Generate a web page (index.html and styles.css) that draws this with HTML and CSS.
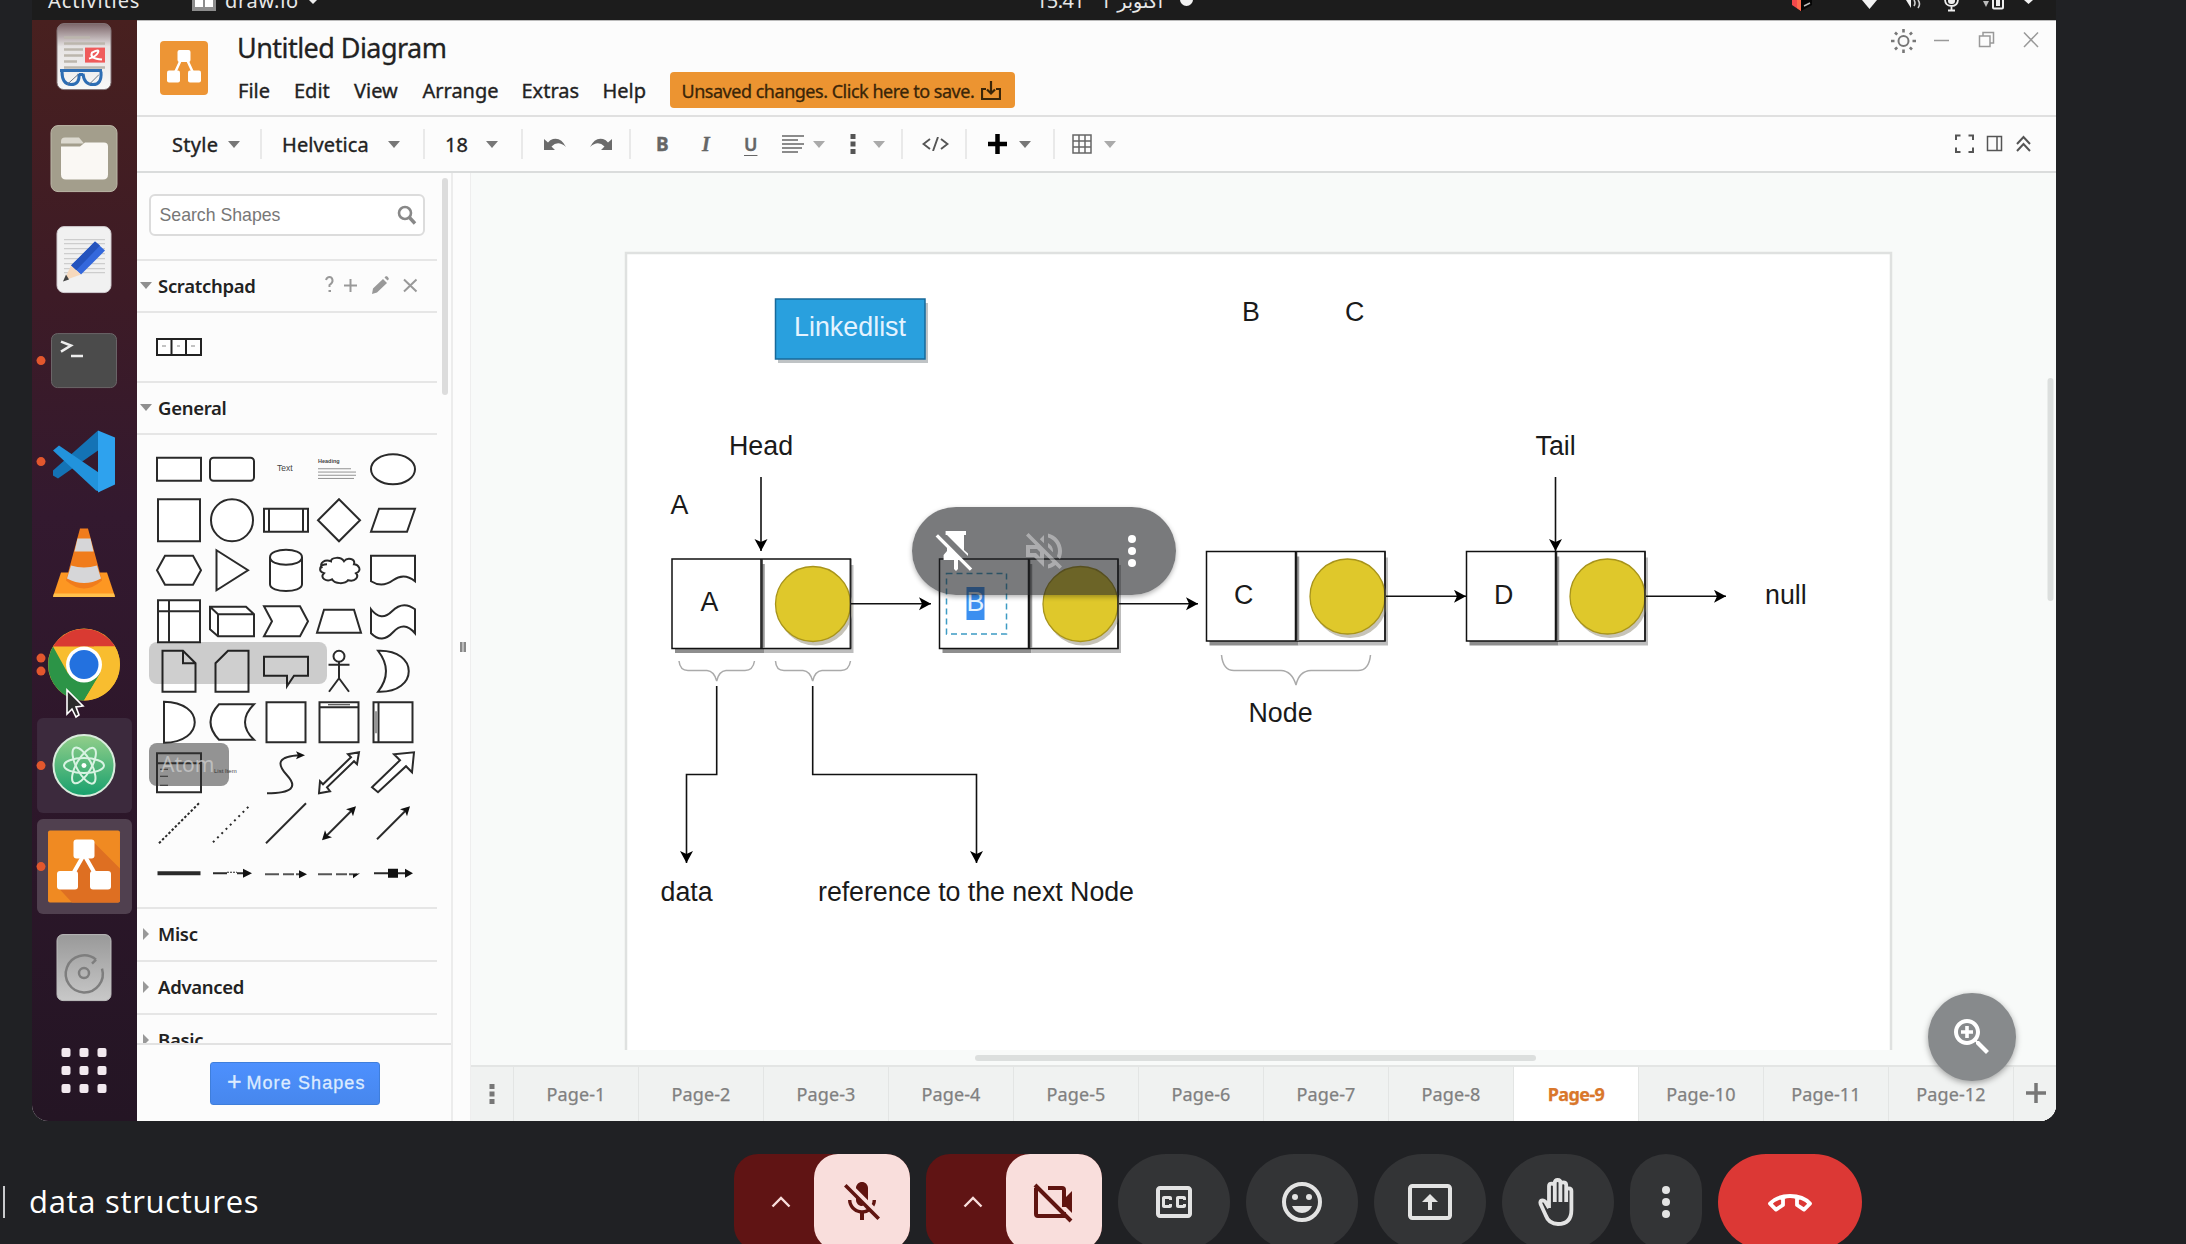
FILE: index.html
```html
<!DOCTYPE html>
<html lang="en">
<head>
<meta charset="utf-8">
<title>data structures</title>
<link rel="stylesheet" href="styles.css">
</head>
<body>
<main class="meeting">
  <section class="share">
    <div class="topbar">
      <span class="tb-activities">Activities</span>
      <svg class="tb-app" width="24" height="20" viewBox="0 0 24 20"><rect width="24" height="19" fill="#8d8d8d"/><rect x="3" y="8" width="8" height="7" fill="#fff"/><rect x="13" y="8" width="8" height="7" fill="#fff"/></svg>
      <span class="tb-name">draw.io</span>
      <i class="tri tb-tri"></i>
      <span class="tb-time">15:41</span><span class="tb-day">1</span><span class="tb-month" dir="rtl">اکتوبر</span><i class="tb-dot"></i>
      <svg class="tb-status" width="256" height="20" viewBox="1786 0 256 20">
        <path d="M1792 0h9v11l-9-6z" fill="#f4484b"/><path d="M1797 0h4v11l-4-3z" fill="#ff6a4c"/><path d="M1801 0h11v5l-11 6z" fill="#050505"/><path d="M1804 6l6-3" stroke="#bbb" stroke-width="1.500"/>
        <path d="M1862 0h15l-7.500 9z" fill="#f2f2f2"/>
        <path d="M1901 0h5l5 8V0z" fill="#f2f2f2"/><path d="M1914 0q2 3 0 6M1918 0q3 4 0 8" stroke="#cfcfcf" stroke-width="1.600" fill="none"/>
        <rect x="1948" y="-10" width="7" height="14" rx="3" fill="#eee"/><path d="M1945-1q0 7 6.500 7t6.500-7M1951.500 6v5M1948 10.500h7" stroke="#eee" stroke-width="1.800" fill="none"/>
        <rect x="1993" y="-6" width="10" height="14.500" rx="1" fill="none" stroke="#eee" stroke-width="2"/><rect x="1996" y="0" width="4" height="6" fill="#eee"/><path d="M1983 1h6l-3 6z" fill="#bbb"/>
        <path d="M2024 0h9l-4.500 4z" fill="#f2f2f2"/>
      </svg>
    </div>
    <div class="desktop">
      <nav class="dock">
        <svg viewBox="-51 -50.600 105 101.200"><defs><linearGradient id="pdf" x2="0" y2="1"><stop stop-color="#7b6468"/><stop offset=".35" stop-color="#e6e3e3"/><stop offset="1" stop-color="#f8f8f8"/></linearGradient></defs><rect x="-27" y="-33" width="54" height="66" rx="7" fill="url(#pdf)" stroke="#857679"/><path d="M-20-19H6M-20-13H21M-20-7H-1M-20-1H-1M-20 5H-7M-20 11H21" stroke="#bcb6ad" stroke-width="2.500"/><rect x="1" y="-9" width="20" height="15" fill="#ef5b5b"/><path d="M5 2Q12 0 14-4T8-4Q5 2 18 3" stroke="#fff" stroke-width="2" fill="none"/><path d="M-24 14H18M-22 15Q-22 28-13 28T-5 17M-1 17Q0 28 9 28T17 15M-5 18H-1" stroke="#2d6db4" stroke-width="3" fill="none"/><path d="M-17 28L-6 18M5 28L15 18" stroke="#697586" fill="none"/></svg>
        <svg viewBox="-51 -50.600 105 101.200"><rect x="-33" y="-33" width="66" height="66" rx="7" fill="#a39e8c" stroke="#bdb8a8"/><path d="M-23-17q0-4 4-4H-5l5 6H-23z" fill="#dcd9cf"/><path d="M-23-12H-4l5-4H20q4 0 4 4V16q0 5-5 5H-18q-5 0-5-5z" fill="#faf8f4"/></svg>
        <svg viewBox="-51 -50.600 105 101.200"><rect x="-27" y="-33" width="54" height="66" rx="7" fill="#f1f1f1" stroke="#cfc9cd"/><path d="M-20-20H21M-20-16H21M-20-11H21M-20-6H21M-20-1H21M-20 4H21M-20 9H21M-20 13H21" stroke="#cdcdcd" stroke-width="1.200"/><path d="M11-18L21-9-3 15-13 6z" fill="#3468dc"/><path d="M11-18L16-14-8 11-13 6z" fill="#2453bd"/><path d="M-13 6L-3 15-20 21z" fill="#f6d9bd"/><path d="M-18 15L-15 20-21 22z" fill="#444"/></svg>
        <svg viewBox="-51 -50.600 105 101.200"><rect x="-32.500" y="-27" width="65" height="54" rx="6" fill="#4b4b4b" stroke="#6b6568"/><path d="M-23-19L-13-15-23-9M-13-4.500H-1" stroke="#eee" stroke-width="2.500" fill="none"/><circle cx="-43" cy="0" r="4.500" fill="#e2572d"/></svg>
        <svg viewBox="-51 -50.600 105 101.200"><path d="M14-31L-31 9V14L-26 17 14-11z" fill="#1473b5"/><path d="M-31-11L-25-16 16 12V30L12 29z" fill="#2293dc"/><path d="M14-31L31-24V23L14 31z" fill="#2ea2ee"/><circle cx="-43" cy="0" r="4.500" fill="#e2572d"/></svg>
        <svg viewBox="-51 -50.600 105 101.200"><path d="M-23 10H23L31 34H-31z" fill="#fd9722"/><path d="M-30 31H30L31 34.500H-31z" fill="#ffc04c"/><path d="M-4-34H4L18 18Q0 34-18 18z" fill="#f07c1c"/><path d="M-6.500-24H6.500L9.500-11H-9.500zM-13 3Q0 7 13 3L17 16Q0 25-17 16z" fill="#d6d6d8"/></svg>
        <svg viewBox="-51 -50.600 105 101.200"><circle r="36" fill="#f8bd2f"/><path d="M-31-18A36 36 0 0 1 31-18H0z" fill="#d93a32"/><path d="M-31-18A36 36 0 0 0 0 36L16 9-16 9z" fill="#2c9447"/><path d="M31-18A36 36 0 0 1 0 36L17 8 10-18z" fill="#f8bd2f"/><circle r="18" fill="#fff"/><circle r="14.500" fill="#2371df"/><circle cx="-43" cy="-6.500" r="4.500" fill="#e2572d"/><circle cx="-43" cy="6.500" r="4.500" fill="#e2572d"/></svg>
        <svg viewBox="-51 -50.600 105 101.200"><defs><linearGradient id="atom" x2="0" y2="1"><stop stop-color="#93cf8a"/><stop offset="1" stop-color="#17a06d"/></linearGradient></defs><rect x="-47" y="-47.500" width="95" height="95" rx="6" fill="#3c2a3d"/><circle r="30.500" fill="url(#atom)" stroke="#d9ecdd" stroke-width="2"/><g fill="none" stroke="#d8f3e2" stroke-width="2"><ellipse rx="20" ry="7.500"/><ellipse rx="20" ry="7.500" transform="rotate(62)"/><ellipse rx="20" ry="7.500" transform="rotate(120)"/></g><circle r="2.500" fill="#fff"/><circle cx="-43" cy="0" r="4.500" fill="#e2572d"/></svg>
        <svg viewBox="-51 -50.600 105 101.200"><rect x="-47" y="-47.500" width="95" height="95" rx="6" fill="#50404f"/><rect x="-36" y="-36" width="72" height="72" rx="2" fill="#f08a22"/><path d="M9-25L36 2V34q0 2-2 2H-12L-26 21-4-4z" fill="#de6f22"/><path d="M0-12L-16 16M0-12L16 16" stroke="#fff" stroke-width="4"/><g fill="#fff"><rect x="-10.500" y="-27" width="21" height="19" rx="3"/><rect x="-27" y="4.500" width="21" height="18.500" rx="3"/><rect x="6" y="4.500" width="21" height="18.500" rx="3"/></g><circle cx="-43" cy="0" r="4.500" fill="#e2572d"/></svg>
        <svg viewBox="-51 -50.600 105 101.200"><defs><linearGradient id="disk" x2="0" y2="1"><stop stop-color="#999"/><stop offset="1" stop-color="#c8c8c8"/></linearGradient></defs><rect x="-27" y="-33" width="54" height="66" rx="6" fill="url(#disk)" stroke="#bcbcbc"/><path d="M12-8A18.500 18.500 0 1 0 18 1M12-8l-4 4" fill="none" stroke="#7e7e7e" stroke-width="2.500"/><circle cy="5.500" r="5" fill="none" stroke="#7e7e7e" stroke-width="2.500"/></svg>
        <svg viewBox="-51 -53 105 101.200"><g fill="#f2e9ef"><rect x="-22.500" y="-23" width="9" height="9" rx="2"/><rect x="-4.500" y="-23" width="9" height="9" rx="2"/><rect x="13.500" y="-23" width="9" height="9" rx="2"/><rect x="-22.500" y="-5" width="9" height="9" rx="2"/><rect x="-4.500" y="-5" width="9" height="9" rx="2"/><rect x="13.500" y="-5" width="9" height="9" rx="2"/><rect x="-22.500" y="13" width="9" height="9" rx="2"/><rect x="-4.500" y="13" width="9" height="9" rx="2"/><rect x="13.500" y="13" width="9" height="9" rx="2"/></g></svg>
      </nav>

      <div class="app">
        <header class="app-head">
          <svg class="logo" width="48" height="54" viewBox="0 0 48 54"><rect width="48" height="54" rx="4" fill="#ed9535"/><path d="M24 12L13 36M24 12L35 36" stroke="#fff" stroke-width="2.500"/><g fill="#fff"><rect x="17.500" y="9" width="13" height="12" rx="2"/><rect x="7" y="29.500" width="13" height="12" rx="2"/><rect x="28" y="29.500" width="13" height="12" rx="2"/></g></svg>
          <div class="head-text">
            <h1>Untitled Diagram</h1>
            <div class="menu">
              <span>File</span><span>Edit</span><span>View</span><span>Arrange</span><span>Extras</span><span>Help</span>
              <button class="unsaved"><span>Unsaved changes. Click here to save.</span><svg width="20" height="20" viewBox="0 0 20 20" fill="none" stroke="#3a2508" stroke-width="2.200"><path d="M5 8H1V18H19V8H15M10 0V12M6 8.500L10 12.500 14 8.500"/></svg></button>
            </div>
          </div>
          <svg class="window-btns" width="150" height="26" viewBox="1890 28 150 26" fill="none" stroke="#777" stroke-width="2">
            <circle cx="1903.500" cy="41" r="5"/><path stroke-width="2.600" d="M1903.500 29v3.500M1903.500 49.500V53M1891 41h3.500M1912.500 41h3.500M1895 32.500l2.200 2.200M1912 32.500l-2.200 2.200M1895 49.500l2.200-2.200M1912 49.500l-2.200-2.200"/>
            <path stroke-width="1.500" stroke="#999" d="M1934 40.500h15M1979.500 36h10.500v10.500h-10.500zM1983 36v-3.500h10.500V43H1990M2024 32.500l14 14.500M2038 32.500l-14 14.500"/>
          </svg>
        </header>

        <div class="toolbar">
          <div class="seg s1"><span>Style</span><i class="tri"></i></div>
          <div class="seg s2"><span>Helvetica</span><i class="tri"></i></div>
          <div class="seg s3"><span>18</span><i class="tri"></i></div>
          <div class="seg s4">
            <svg width="23" height="14" viewBox="0 0 23 14"><path d="M0 2V13H11L7.500 9.500Q14 3 22 10 17 0 9 2 6 2.500 4 5.500z" fill="#6b6b6b"/></svg>
            <svg width="23" height="14" viewBox="0 0 23 14"><path d="M23 2V13H12L15.500 9.500Q9 3 1 10 6 0 14 2 17 2.500 19 5.500z" fill="#6b6b6b"/></svg>
          </div>
          <div class="seg s5">
            <b class="bold">B</b><b class="ital">I</b><b class="under">U</b>
            <svg class="align" width="22" height="18" viewBox="0 0 22 18"><path d="M0 1H22M0 5H16M0 9H22M0 13H20M0 17H16" stroke="#666" stroke-width="1.600"/></svg><i class="tri light"></i>
            <svg class="vdots" width="6" height="20" viewBox="0 0 6 20" fill="#555"><path d="M.5 0h5v5h-5zM.5 7.500h5v5h-5zM.5 15h5v5h-5z"/></svg><i class="tri light"></i>
          </div>
          <div class="seg s6"><svg width="27" height="14" viewBox="0 0 27 14" fill="none" stroke="#555" stroke-width="1.900"><path d="M8 2L1.500 7 8 12M19 2l6.500 5L19 12M16 0L11 14"/></svg></div>
          <div class="seg s7"><svg width="19" height="20" viewBox="0 0 19 20"><path d="M9.500 0V20M0 10H19" stroke="#000" stroke-width="4.500"/></svg><i class="tri"></i></div>
          <div class="seg s8"><svg width="20" height="20" viewBox="0 0 20 20" fill="none" stroke="#666" stroke-width="1.500"><path d="M1 1H19V19H1zM1 7H19M1 13H19M7 1V19M13 1V19"/></svg><i class="tri light"></i></div>
          <svg class="view-btns" width="78" height="20" viewBox="1954 134 78 20" fill="none" stroke="#555" stroke-width="2"><path d="M1956 140v-4.500h4.500M1968.500 135.500h4.500v4.500M1973 147.500v4.500h-4.500M1960.500 152h-4.500v-4.500"/><path stroke-width="1.500" d="M1987.500 136.500h14v14h-14zM1997 136.500v14"/><path d="M2017 144l6.500-7 6.500 7M2017 151l6.500-7 6.500 7"/></svg>
        </div>

        <div class="body">
          <aside class="sidebar">
            <div class="shapes-scroll">
              <div class="search"><span>Search Shapes</span><svg width="20" height="20" viewBox="0 0 20 20" fill="none" stroke="#888"><circle cx="8" cy="8" r="6" stroke-width="2.600"/><path d="M12 12l6 6.500" stroke-width="3.400"/></svg></div>
              <div class="section scratch"><i class="tri"></i><b>Scratchpad</b>
                <svg width="94" height="20" viewBox="324 276 94 20" fill="none" stroke="#999" stroke-width="2"><path d="M326 281q1-3 3.500-3t3 3-3 5v2M328.500 292h2.500M344 286.500h13M350.500 280v13M404 280.500l12.500 12M416.500 280.500l-12.500 12"/><path fill="#999" stroke="none" d="M372 295l1-5.500 10-9.500 4 4-10 9.500zM384.500 278.500l1.500-1.500q2 0 3 3l-1.500 1.500z"/></svg>
              </div>
              <div class="scratch-body"><svg width="46" height="18" viewBox="0 0 46 18"><path d="M1 1H45V17H1zM15.500 1V17M30 1V17" fill="#fff" stroke="#222" stroke-width="2"/><path d="M6 8h4M21 8h3M35 8h4" stroke="#888"/></svg></div>
              <div class="section"><i class="tri"></i><b>General</b></div>
              <div class="palette">
                <svg viewBox="-27 -25 54 50"><path d="M-22-11.500H22V11.500H-22z"/></svg>
                <svg viewBox="-27 -25 54 50"><rect x="-22" y="-11.500" width="44" height="23" rx="3.500"/></svg>
                <svg viewBox="-27 -25 54 50"><text x="-9" y="2" font-size="8.500" class="t">Text</text></svg>
                <svg viewBox="-27 -25 54 50"><text x="-21" y="-6" font-size="5.500" font-weight="bold" class="t">Heading</text><path stroke-width=".8" stroke="#777" d="M-21-.5H12M-21 2.800H17M-21 6H17M-21 9.200H15"/></svg>
                <svg viewBox="-27 -25 54 50"><ellipse rx="22" ry="15"/></svg>

                <svg viewBox="-27 -25 54 50"><path d="M-21-21H21V21H-21z"/></svg>
                <svg viewBox="-27 -25 54 50"><circle r="21"/></svg>
                <svg viewBox="-27 -25 54 50"><path d="M-22-11.500H22V11.500H-22zM-17-11.500V11.500M17-11.500V11.500"/></svg>
                <svg viewBox="-27 -25 54 50"><path d="M0-21L21 0 0 21-21 0z"/></svg>
                <svg viewBox="-27 -25 54 50"><path d="M-14-11.500H22L14 11.500H-22z"/></svg>

                <svg viewBox="-27 -25 54 50"><path d="M-14-14.500H14L22 0 14 14.500H-14L-22 0z"/></svg>
                <svg viewBox="-27 -25 54 50"><path d="M-15.500-20L16 0-15.500 20z"/></svg>
                <svg viewBox="-27 -25 54 50"><path d="M-16-13V14C-16 23 16 23 16 14V-13C16-23-16-23-16-13C-16-3 16-3 16-13"/></svg>
                <svg viewBox="-27 -25 54 50"><path d="M-12-6C-20-6-21 1-15 3C-20 8-12 12-7 9C-4 14 6 14 9 10C17 12 20 6 17 3C24 0 19-6 15-6C17-12 8-13 5-9C2-14-8-13-8-9C-14-11-20-8-17-2"/></svg>
                <svg viewBox="-27 -25 54 50"><path d="M-22-14.500H22V11Q11 2 0 10T-22 11z"/></svg>

                <svg viewBox="-27 -25 54 50"><path d="M-21-21H21V21H-21zM-10-21V21M-21-10H21"/></svg>
                <svg viewBox="-27 -25 54 50"><path d="M-22-14.500H14L22-7V15H-14L-22 8zM-22-14.500L-14-7H22M-14-7V15"/></svg>
                <svg viewBox="-27 -25 54 50"><path d="M-22-15H14L22 0 14 15H-22L-14 0z"/></svg>
                <svg viewBox="-27 -25 54 50"><path d="M-15-11.500H15L22 11.500H-22z"/></svg>
                <svg viewBox="-27 -25 54 50"><path d="M-22-12Q-12 1-1-10T22-12V12Q11-1 0 11T-22 12z"/></svg>

                <svg viewBox="-27 -25 54 50"><path d="M-16.500-20.500H4L16.500-8V20.500H-16.500zM4-20.500V-8H16.500"/></svg>
                <svg viewBox="-27 -25 54 50"><path d="M-4-20.500H16.500V20.500H-16.500V-8z"/></svg>
                <svg viewBox="-27 -25 54 50"><path d="M-22-14.500H22V4.500H8L1 15V4.500H-22z"/></svg>
                <svg viewBox="-27 -25 54 50"><circle cy="-15" r="5.500"/><path d="M0-9.500V7M-10.500-6.500H10.500M0 7L-10 20.500M0 7L10 20.500"/></svg>
                <svg viewBox="-27 -25 54 50"><path d="M-15-20.500C26-22 26 22-15 20.500Q1 0-15-20.500z"/></svg>

                <svg viewBox="-27 -25 54 50"><path d="M-15-20.500C26-20 26 20-15 20.500z"/></svg>
                <svg viewBox="-27 -25 54 50"><path d="M-13-18H22Q4 0 22 17.500H-13Q-30 0-13-18z"/></svg>
                <svg viewBox="-27 -25 54 50"><path d="M-19.500-20H19.500V20H-19.500z"/></svg>
                <svg viewBox="-27 -25 54 50"><path d="M-19.500-20H19.500V20H-19.500zM-19.500-15H19.500"/><path stroke-width="1" d="M-11-17.500H11"/></svg>
                <svg viewBox="-27 -25 54 50"><path d="M-19.500-20H19.500V20H-19.500zM-14.500-20V20"/><path stroke-width="1" d="M-17-11V11"/></svg>

                <svg viewBox="-27 -25 54 50"><path d="M-22-19H22V20H-22zM-22-9H22"/><path stroke-width="1" d="M-19-3H-11M-19 4H-11M-19 13H-11"/></svg>
                <svg viewBox="-27 -25 54 50"><text x="-18" y="1" font-size="6" class="t">List Item</text></svg>
                <svg viewBox="-27 -25 54 50"><path fill="none" d="M-19 21C6 21 12 15 1 3S-8-16 14-17"/><path class="k" d="M19-17L10-21 12-17 10-13z"/></svg>
                <svg viewBox="-27 -25 54 50"><path d="M-20 21L-19 9-16 12 12-15 9-18 20-20 18-8 15-11-12 15-9 19z"/></svg>
                <svg viewBox="-27 -25 54 50"><path d="M-21 15L7-12 1-18 21-20 19 0 13-6-15 20z"/></svg>

                <svg viewBox="-27 -25 54 50"><path stroke-dasharray="2.500 2" d="M-20 20L20-20"/></svg>
                <svg viewBox="-27 -25 54 50"><path stroke-dasharray="2 4" d="M-19 19L19-19"/></svg>
                <svg viewBox="-27 -25 54 50"><path d="M-20 20L20-20"/></svg>
                <svg viewBox="-27 -25 54 50"><path d="M-13 13L13-13"/><path class="k" d="M-17 17L-14 7-12 12-7 14zM17-17L14-7 12-12 7-14z"/></svg>
                <svg viewBox="-27 -25 54 50"><path d="M-16 16L13-13"/><path class="k" d="M17-17L14-7 12-12 7-14z"/></svg>

                <svg viewBox="-27 -25 54 50"><path stroke-width="4" d="M-21.500 0H21.500"/></svg>
                <svg viewBox="-27 -25 54 50"><path d="M-19 0H-5M5 0H15"/><path stroke-width="1" stroke-dasharray="2 1" d="M-5-1H5"/><path class="k" d="M20 0L11-4.500V4.500z"/></svg>
                <svg viewBox="-27 -25 54 50"><path stroke="#555" d="M-21 1H-7M-3 1H8M10 1H17"/><path class="k" d="M21 1L13-3V5z"/></svg>
                <svg viewBox="-27 -25 54 50"><path stroke="#555" d="M-21 1H-7M-3 1H8M10 1H18"/><path class="k" d="M21 0L14 1V5z"/></svg>
                <svg viewBox="-27 -25 54 50"><path d="M-19 0H14"/><path class="k" d="M-5-4.500H5V4.500H-5zM20 0L12-4.500V4.500z"/></svg>
              </div>
              <div class="section closed"><i class="rtri"></i><b>Misc</b></div>
              <div class="section closed"><i class="rtri"></i><b>Advanced</b></div>
              <div class="section closed"><i class="rtri"></i><b>Basic</b></div>
              <i class="side-thumb"></i>
              <div class="ghost ghost-wide"></div>
              <div class="ghost ghost-atom">Atom</div>
            </div>
            <div class="more"><button><span class="plus">+</span>More Shapes</button></div>
          </aside>
          <div class="splitter"><i></i></div>

          <div class="work">
            <div class="canvas">
              <svg class="diagram" width="1585" height="892" viewBox="471 173 1585 892">
                <defs>
                  <marker id="arrow" markerUnits="userSpaceOnUse" markerWidth="14" markerHeight="14" refX="12" refY="6.500" orient="auto"><path d="M0 0L12 6.500 0 13 3 6.500z"/></marker>
                  <g id="node">
                    <path d="M3 4H92V94H3z" fill="#8e8e8e"/><path d="M92 6H181.500V94H92z" fill="#bdbdbd"/>
                    <path d="M0 0H89V89.500H0zM89 0H178.500V89.500H89z" fill="#fff" stroke="#111" stroke-width="1.500"/>
                    <path d="M91.500 5V89" stroke="#999" stroke-width="2.500"/><path d="M90 0V89" stroke="#222" stroke-width="1.500"/>
                    <ellipse cx="143.500" cy="49" rx="37.500" ry="37.500" fill="#c6c3b8"/>
                    <ellipse cx="141" cy="45" rx="37.500" ry="37.500" fill="#dfc82b" stroke="#a8941b" stroke-width="1.300"/>
                    <path d="M178.500 0V89.500" stroke="#222" stroke-width="1.500"/>
                  </g>
                </defs>
                <path d="M626 1050V253H1891V1050" fill="#fff" stroke="#dfe1e0" stroke-width="2.500"/>
                <path d="M778 303H928V363H778z" fill="#bfc3c5"/>
                <path d="M775.500 299H925V359H775.500z" fill="#29a0de" stroke="#17699a" stroke-width="1.500"/>
                <use href="#node" x="672" y="559"/><use href="#node" x="939.500" y="559"/><use href="#node" x="1206.500" y="551.500"/><use href="#node" x="1466.500" y="551.500"/>
                <g fill="none" stroke="#111" stroke-width="1.600">
                  <path class="ln" d="M761 477V551"/><path class="ln" d="M1555.500 477V551"/>
                  <path class="ln" d="M851 603.700H931"/><path class="ln" d="M1119 603.700H1198"/><path class="ln" d="M1386 596.300H1466"/><path class="ln" d="M1646 596.300H1726"/>
                  <path class="ln" d="M716.700 686V774.500H686.500V863"/><path class="ln" d="M812.700 686V774.500H976.500V863"/>
                </g>
                <g fill="none" stroke="#aaa" stroke-width="1.500">
                  <path d="M679 661Q680 670.500 688 670.500H707Q714 671 716.700 681Q719 671 726 670.500H745Q753 670.500 754.500 661"/>
                  <path d="M775.500 661Q776 670.500 784 670.500H803Q810 671 812.700 681Q815 671 822 670.500H841Q849 670.500 850.500 661"/>
                  <path d="M1221.500 655Q1223 670.500 1234 670.500H1281Q1292 671 1296 685Q1299 671 1311 670.500H1358Q1369 670.500 1370.500 655"/>
                </g>
                <path d="M946.500 573.500H1006.500V634H946.500z" fill="none" stroke="#3d9bc4" stroke-width="1.500" stroke-dasharray="6 4"/>
                <rect x="966.500" y="587" width="18" height="33" fill="#3b8ff0"/>
                <g class="labels">
                  <text x="794" y="335.500" class="on-blue" textLength="112">Linkedlist</text>
                  <text x="1242" y="320.700">B</text><text x="1345" y="320.700">C</text>
                  <text x="729" y="454.800">Head</text><text x="1535.500" y="454.800">Tail</text>
                  <text x="670.500" y="514.300">A</text><text x="700.500" y="610.700">A</text>
                  <text x="966.500" y="610.500" class="on-blue">B</text>
                  <text x="1234" y="603.500">C</text><text x="1494" y="603.500">D</text><text x="1765" y="603.500">null</text>
                  <text x="1248.500" y="722">Node</text>
                  <text x="660.500" y="900.500">data</text><text x="818" y="900.500" textLength="316">reference to the next Node</text>
                </g>
                <rect x="975" y="1055" width="561" height="6" rx="3" fill="#dcdfde"/>
                <rect x="2047.500" y="378" width="6" height="223" rx="3" fill="#dcdfde"/>
              </svg>
            </div>
            <div class="tabs">
              <div class="tab-menu"><svg width="6" height="20" viewBox="0 0 6 20" fill="#777"><path d="M.5 0h5v5h-5zM.5 7.500h5v5h-5zM.5 15h5v5h-5z"/></svg></div>
              <span>Page-1</span><span>Page-2</span><span>Page-3</span><span>Page-4</span><span>Page-5</span><span>Page-6</span><span>Page-7</span><span>Page-8</span><span class="active">Page-9</span><span>Page-10</span><span>Page-11</span><span>Page-12</span>
              <div class="tab-add"><svg width="20" height="20" viewBox="0 0 20 20"><path d="M10 0V20M0 10H20" stroke="#777" stroke-width="3.500"/></svg></div>
            </div>
          </div>
        </div>
      </div>
    </div>

    <svg class="cursor" width="22" height="32" viewBox="0 0 22 32"><path d="M2 2V26L7 21 11 29 14 27 11 19 18 18z" fill="#2b2b2b" stroke="#fff" stroke-width="1.600"/></svg>
    <div class="pill">
      <svg viewBox="0 0 24 24" fill="#fff"><path d="M6.800 2H17V4H16V11.500L18 13.300V14.500L7.500 4H6.800zM7.500 9L15 16.500H13V21L12 22 11 21V16.500H5.800V14L7.500 12z"/><path d="M2.400 4.200L19.500 21.300" stroke="#fff" stroke-width="1.700"/></svg>
      <svg class="dim" viewBox="0 0 24 24" fill="#fff"><path d="M16.500 12c0-1.770-1.020-3.290-2.500-4.030v2.210l2.450 2.450c.03-.2.050-.41.050-.63zm2.500 0c0 .94-.2 1.820-.54 2.640l1.510 1.510C20.630 14.910 21 13.500 21 12c0-4.280-2.990-7.860-7-8.770v2.060c2.890.86 5 3.540 5 6.710zM4.270 3L3 4.270 7.730 9H3v6h4l5 5v-6.730l4.250 4.250c-.67.52-1.420.93-2.250 1.180v2.060c1.380-.31 2.630-.95 3.690-1.810L19.730 21 21 19.730l-9-9L4.270 3zM12 4L9.910 6.090 12 8.180V4zM5 11H8.500L10 12.500V15L8 13H5z" fill-rule="evenodd"/></svg>
      <svg viewBox="0 0 24 24" fill="#fff"><circle cx="12" cy="6" r="2"/><circle cx="12" cy="12" r="2"/><circle cx="12" cy="18" r="2"/></svg>
    </div>
    <div class="zoom-btn"><svg viewBox="0 0 24 24" fill="#fff"><path d="M15.500 14h-.79l-.28-.27C15.410 12.590 16 11.110 16 9.500 16 5.910 13.090 3 9.500 3S3 5.910 3 9.500 5.910 16 9.500 16c1.610 0 3.090-.59 4.230-1.570l.27.28v.79l5 4.990L20.490 19l-4.990-5zm-6 0C7.010 14 5 11.990 5 9.500S7.010 5 9.500 5 14 7.010 14 9.500 11.990 14 9.500 14z"/><path d="M9.500 6.500V12.500M6.500 9.500H12.500" stroke="#fff" stroke-width="1.800"/></svg></div>
  </section>

  <footer class="controls">
    <div class="room">data structures</div>
    <div class="buttons">
      <div class="split"><div class="caret"><svg width="20" height="12" viewBox="0 0 20 12"><path d="M1.500 10.500L10 2l8.500 8.500" fill="none" stroke="#f9dedc" stroke-width="2.400"/></svg></div>
        <div class="light-btn"><svg viewBox="0 0 24 24" fill="#601410"><path d="M19 11h-1.700c0 .74-.16 1.430-.43 2.050l1.230 1.230c.56-.98.9-2.090.9-3.280zM14.980 11.170c0-.06.020-.11.020-.17V5c0-1.660-1.340-3-3-3S9 3.340 9 5v.18l5.980 5.990zM4.270 3L3 4.270l6.010 6.010V11c0 1.660 1.330 3 2.990 3 .22 0 .44-.03.65-.08l1.660 1.660c-.71.33-1.500.52-2.310.52-2.760 0-5.300-2.100-5.300-5.100H5c0 3.410 2.720 6.230 6 6.720V21h2v-3.280c.91-.13 1.770-.45 2.540-.9L19.730 21 21 19.730 4.270 3z"/></svg></div></div>
      <div class="split"><div class="caret"><svg width="20" height="12" viewBox="0 0 20 12"><path d="M1.500 10.500L10 2l8.500 8.500" fill="none" stroke="#f9dedc" stroke-width="2.400"/></svg></div>
        <div class="light-btn"><svg viewBox="0 0 24 24" fill="none" stroke="#601410" stroke-width="2"><path d="M3 5V18q0 1 1 1H17V17M9 5H16q1 0 1 1V14.500M2.500 3.500L20.500 21.500"/><path d="M17 10.500L21 6.500V17.500L17 13.500z" fill="#601410" stroke="none"/></svg></div></div>
      <div class="round"><svg viewBox="0 0 24 24" fill="#e3e3e3"><path d="M19 4H5c-1.110 0-2 .9-2 2v12c0 1.100.89 2 2 2h14c1.100 0 2-.9 2-2V6c0-1.100-.9-2-2-2zm0 14H5V6h14v12zM7 15h3c.55 0 1-.45 1-1v-1H9.500v.5h-2v-3h2v.5H11v-1c0-.55-.45-1-1-1H7c-.55 0-1 .45-1 1v4c0 .55.450 1 1 1zm7 0h3c.55 0 1-.45 1-1v-1h-1.500v.5h-2v-3h2v.5H18v-1c0-.55-.45-1-1-1h-3c-.55 0-1 .45-1 1v4c0 .55.450 1 1 1z"/></svg></div>
      <div class="round"><svg viewBox="0 0 24 24" fill="#e3e3e3"><circle cx="12" cy="12" r="9" fill="none" stroke="#e3e3e3" stroke-width="2"/><circle cx="8.500" cy="9.500" r="1.500"/><circle cx="15.500" cy="9.500" r="1.500"/><path d="M7 14H17Q15.500 17.500 12 17.500T7 14z"/></svg></div>
      <div class="round"><svg viewBox="0 0 24 24" fill="#e3e3e3"><rect x="2" y="4" width="20" height="16" rx="1.200" fill="none" stroke="#e3e3e3" stroke-width="2"/><path d="M12 8L16 12H13V16H11V12H8z"/></svg></div>
      <div class="round"><svg viewBox="0 0 24 24" fill="none" stroke="#e3e3e3" stroke-width="1.900" stroke-linejoin="round"><path d="M7.500 15V4q0-1.200 1.400-1.200T10.400 4V12M10.400 4V2.300q0-1.300 1.400-1.300t1.400 1.300V12M13.200 3.200q0-1 1.400-1t1.500 1.200V12M16.100 6.500q0-1.300 1.300-1.300t1.300 1.300V16q0 7-6.700 7-4.600 0-6.200-4.500L3.300 13q-.5-1.700.8-1.800 1.300 0 1.900 1.300L7.500 15"/></svg></div>
      <div class="round narrow"><svg viewBox="0 0 24 24" fill="#e3e3e3"><circle cx="12" cy="6" r="2"/><circle cx="12" cy="12" r="2"/><circle cx="12" cy="18" r="2"/></svg></div>
      <div class="round end"><svg viewBox="0 0 24 24" fill="none" stroke="#fff" stroke-width="1.900" stroke-linejoin="round"><path d="M8.500 9.800Q12 8.300 15.500 9.800V13.500L19 15.800 22 12.800Q18.500 9 12 9T2 12.800L5 15.800 8.500 13.500z"/></svg></div>
    </div>
  </footer>
</main>
</body>
</html>
```
FILE: styles.css
```css
* { box-sizing: border-box; }
body { margin: 0; background: #202124; overflow: hidden; }
.meeting { width: 2186px; height: 1244px; overflow: hidden; font-family: "Noto Sans", sans-serif; }
svg { display: block; flex: none; }
b, h1, span, i { font-style: normal; white-space: nowrap; }

.share { position: relative; width: 2024px; height: 1121px; margin-left: 32px; border-radius: 0 0 16px 16px; overflow: hidden; background: #fcfcfc; }

.topbar { height: 20px; background: #1c1c1c; color: #e8e8e8; display: flex; align-items: flex-start; padding-left: 16px; font-size: 20px; line-height: 28px; overflow: hidden; }
.topbar span { margin-top: -13px; flex: none; }
.tb-activities { width: 144px; letter-spacing: .9px; }
.tb-app { margin-top: -8px; }
.tb-name { width: 92px; padding-left: 9px; letter-spacing: .7px; }
.tb-tri { margin-top: -1px; }
.topbar .tb-time { margin-left: 718px; width: 64px; letter-spacing: -.6px; }
.tb-day { width: 14px; }
.tb-month { width: 49px; font-family: "DejaVu Sans", sans-serif; font-size: 19px; }
.tb-dot { width: 13px; height: 13px; border-radius: 50%; background: #f2f2f2; margin: -7px 0 0 17px; }
.tb-status { margin-left: 593px; }

.tri { flex: none; width: 0; height: 0; border: 6px solid transparent; border-top: 7px solid #777; border-bottom: 0; }
.tri.light { border-top-color: #aaa; }
.tri.tb-tri { border-top-color: #eee; border-width: 5px 5px 0; }
.rtri { flex: none; width: 0; height: 0; border: 6px solid transparent; border-left: 6px solid #999; border-right: 0; }

.desktop { display: flex; height: 1101px; }
.dock { width: 105px; overflow: hidden; background: linear-gradient(#48201f, #3d1b26 25%, #33192f 45%, #2e172b 65%, #241524); display: flex; flex-direction: column; }
.dock svg { width: 105px; height: 101.2px; margin-left: .7px; }
.dock svg:first-child { margin-top: -13.6px; }

.app { width: 1919px; display: flex; flex-direction: column; background: #fcfcfc; color: #222; }
.app-head { height: 97px; border-bottom: 2px solid #e0e0e0; border-top: 1px solid #bbb; display: flex; }
.logo { margin: 20px 0 0 23px; }
.head-text { padding: 9px 0 0 29px; }
h1 { margin: 0; font-weight: 400; font-size: 27px; line-height: 36px; letter-spacing: -.55px; -webkit-text-stroke: .3px; }
.menu { display: flex; align-items: center; height: 36px; margin-top: 6px; padding-left: 1px; font-size: 20px; -webkit-text-stroke: .35px; }
.menu > span:nth-child(1) { width: 56px; }
.menu > span:nth-child(2) { width: 60px; }
.menu > span:nth-child(3) { width: 68.5px; }
.menu > span:nth-child(4) { width: 99px; }
.menu > span:nth-child(5) { width: 81px; }
.menu > span:nth-child(6) { width: 67px; }
.unsaved { width: 345px; height: 36px; border: 0; border-radius: 4px; background: #ec9431; color: #3a2508; font: 18px "Noto Sans", sans-serif; letter-spacing: -.48px; padding: 2px 14px 0 12px; display: flex; justify-content: space-between; align-items: center; -webkit-text-stroke: .3px; }
.window-btns { margin: 7px 16px 0 auto; }

.toolbar { height: 56px; border-bottom: 2px solid #dadcdc; display: flex; align-items: center; font-size: 20px; }
.seg { height: 30px; display: flex; align-items: center; border-right: 2px solid #e9e9e9; -webkit-text-stroke: .35px; }
.seg .tri { margin-left: 9px; }
.s1 { width: 125px; padding-left: 35px; letter-spacing: .3px; }
.s1 .tri { margin-left: 10px; }
.s2 { width: 163px; padding-left: 20px; letter-spacing: .1px; }
.s2 span { width: 97px; }
.s3 { width: 98px; padding-left: 20px; }
.s3 span { width: 32px; }
.s4 { width: 108px; padding-left: 21px; gap: 22px; }
.s5 { width: 272px; padding-left: 25px; color: #666; }
.bold { width: 43px; font-size: 19px; }
.ital { width: 45px; padding-left: 3px; font: italic bold 20px "Liberation Serif", serif; }
.under { width: 38px; font-weight: 600; font-size: 18px; text-decoration: underline; text-underline-offset: 4px; }
.vdots { margin-left: 25px; }
.s5 .vdots + .tri { margin-left: 17px; }
.s6 { width: 64px; padding-left: 19px; }
.s7 { width: 88px; padding-left: 21px; }
.s7 .tri { margin-left: 12px; }
.s8 { border: 0; padding-left: 17px; }
.s8 .tri { margin-left: 12px; }
.view-btns { margin: 0 24px 0 auto; }

.body { display: flex; height: 948px; }
.sidebar { width: 316px; border-right: 2px solid #ececec; display: flex; flex-direction: column; }
.shapes-scroll { position: relative; height: 870px; overflow: hidden; }
.search { margin: 21px 0 23px 12px; width: 276px; height: 42px; border: 2px solid #dcdcdc; border-radius: 6px; background: #fff; display: flex; align-items: center; justify-content: space-between; padding: 0 6px 0 8.5px; font: 17.7px "Liberation Sans", sans-serif; color: #777; }
.section { width: 300px; height: 53px; border-top: 2px solid #e6e6e6; border-bottom: 2px solid #e6e6e6; display: flex; align-items: center; padding: 0 0 2px 3px; font-size: 18.5px; letter-spacing: -.3px; }
.section b { margin-left: 6px; font-weight: 600; }
.section .tri { border-top-color: #8f8f8f; }
.scratch { height: 54px; }
.scratch svg { margin-left: auto; margin-right: 19px; }
.scratch-body { height: 68px; padding: 25px 0 0 19px; }
.scratch-body + .section { height: 54px; }
.palette { display: grid; grid-template-columns: repeat(5, 53.5px); grid-auto-rows: 50.5px; padding: 9px 0 8.5px 14.5px; }
.palette svg { width: 54px; height: 50.5px; fill: #fff; stroke: #2a2a2a; stroke-width: 2; overflow: visible; }
.palette .t { fill: #444; stroke: none; font-family: "Liberation Sans", sans-serif; }
.palette .k { fill: #111; stroke: none; }
.closed { height: 53px; border-bottom: 0; }
.closed .rtri { margin-left: 3px; }
.closed b { margin-left: 9px; }
.side-thumb { position: absolute; left: 305px; top: 5px; width: 6px; height: 217px; border-radius: 3px; background: #dcdcdc; }
.ghost { position: absolute; left: 12px; border-radius: 8px; }
.ghost-wide { top: 469px; width: 178px; height: 42px; background: rgba(0, 0, 0, .19); }
.ghost-atom { top: 569.5px; width: 80px; height: 43px; background: rgba(50, 50, 50, .52); color: rgba(205, 205, 205, .75); font-size: 21px; line-height: 43px; padding-left: 12px; }
.more { flex: 1; border-top: 2px solid #e2e2e2; padding: 17px 0 0 72.5px; }
.more button { width: 170px; height: 43px; border: 1px solid #3f7edb; border-radius: 3px; background: linear-gradient(#4d90fe, #4787ed); color: #dcebff; font: 18px "Liberation Sans", sans-serif; letter-spacing: 1.1px; padding: 0; display: flex; align-items: center; justify-content: center; -webkit-text-stroke: .3px; }
.plus { font-size: 25px; width: 23px; margin: -5px 0 0; }
.splitter { width: 18px; border-right: 1px solid #eee; display: flex; align-items: center; padding-left: 7px; }
.splitter i { width: 6px; height: 10px; background: repeating-linear-gradient(90deg, #888 0 2px, #bbb 2px 4px); }
.work { width: 1585px; background: #f8faf9; }
.canvas { height: 892px; }
.diagram { overflow: hidden; }
.ln { marker-end: url(#arrow); }
.labels { font: 26.8px "Liberation Sans", sans-serif; fill: #1a1a1a; }
.labels .on-blue { fill: #e4f3ff; }

.tabs { height: 56px; border-top: 2px solid #e3e5e4; background: #f0f2f1; display: flex; color: #808080; font-size: 18px; letter-spacing: .1px; -webkit-text-stroke: .25px; }
.tabs > * { display: flex; align-items: center; justify-content: center; border-right: 1px solid #e3e5e4; }
.tabs > span { width: 125px; }
.tabs > .tab-menu { width: 43px; padding-bottom: 1px; }
.tabs .active { background: #fff; color: #d9772b; font-weight: 700; letter-spacing: -.6px; }
.tabs .tab-add { flex: 1; border: 0; padding: 0 0 3px 2px; }

.cursor { position: absolute; left: 33px; top: 688px; }
.pill { position: absolute; left: 880px; top: 507px; width: 264px; height: 88px; border-radius: 44px; background: rgba(32, 33, 36, .6); box-shadow: 0 2px 5px rgba(0, 0, 0, .3); display: flex; align-items: center; justify-content: space-around; }
.pill svg, .zoom-btn svg { width: 48px; height: 48px; }
.pill .dim { opacity: .38; }
.zoom-btn { position: absolute; left: 1896px; top: 993px; width: 88px; height: 88px; border-radius: 50%; background: #878a8c; box-shadow: 0 2px 6px rgba(0, 0, 0, .35); display: flex; align-items: center; justify-content: center; }

.controls { display: flex; padding-top: 33px; height: 129px; }
.room { width: 731px; height: 32px; margin: 32px 0 0 3px; border-left: 2px solid #c9cacc; padding-left: 24px; color: #fff; font: 500 31px/31px "Open Sans", sans-serif; letter-spacing: .7px; }
.buttons { display: flex; gap: 16px; }
.split { width: 176px; height: 96px; border-radius: 24px; background: #601414; display: flex; }
.caret { width: 80px; display: flex; align-items: center; justify-content: center; padding-left: 13px; }
.light-btn { width: 96px; height: 96px; border-radius: 24px; background: #f9dedc; display: flex; align-items: center; justify-content: center; }
.light-btn svg, .round svg { width: 48px; height: 48px; }
.round { width: 112px; height: 96px; border-radius: 48px; background: #333436; display: flex; align-items: center; justify-content: center; }
.narrow { width: 72px; }
.end { width: 144px; background: #dc3835; }
```
